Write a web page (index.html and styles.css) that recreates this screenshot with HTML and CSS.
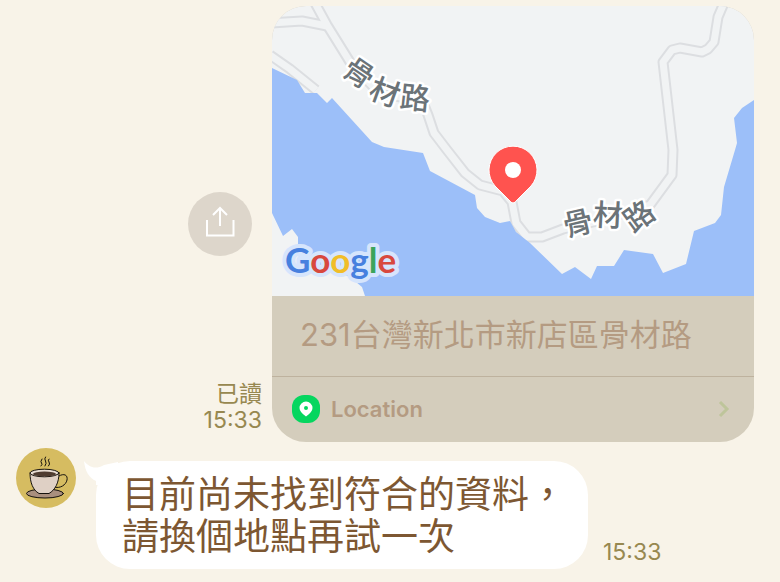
FILE: index.html
```html
<!DOCTYPE html>
<html lang="zh-Hant">
<head>
<meta charset="utf-8">
<meta name="viewport" content="width=device-width, initial-scale=1">
<title>Chat</title>
<link rel="stylesheet" href="styles.css">
</head>
<body>
<main class="chat">
  <section class="message message-sent">
    <div class="sent-side">
      <button class="share" type="button" aria-label="Share">
        <svg viewBox="0 0 64 64" width="64" height="64" fill="none" stroke="#fff" stroke-width="2">
          <path d="M19 28V43.500H45.500V28M32 34V16M25 23L32 16L39 23"/>
        </svg>
      </button>
      <div class="meta"><span>已讀</span><time>15:33</time></div>
    </div>
    <article class="card">
      <svg class="map" viewBox="0 0 482 290" role="img" aria-label="Map">
        <defs>
          <g id="roads" fill="none" stroke-linejoin="round">
            <path d="M43 -3L55 19L78 56L108 88L150 94L156 109L162 127L175 144L193 167L208 179L231 185L240 196L244 217L255 231L270 231L291 223L330 214L378 199L400 169L401 144L391 56L400 44L408 42L430 46L436 43L442 36L446 11L452 -3"/>
            <path d="M-2 17L30 15L55 20"/>
            <path d="M-2 49L18 63L44 84"/>
          </g>
        </defs>
        <rect width="482" height="290" fill="#f1f3f4"/>
        <use href="#roads" stroke="#dcdee1" stroke-width="11"/>
        <use href="#roads" stroke="#f1f3f4" stroke-width="7"/>
        <path fill="#9cbff9" d="M0 62L25 74L33 87L45 87L55 97L60 92L100 136L112 141L151 147L158 165L203 189L205 202L213 211L228 217L238 215L244 226L258 237L290 268L303 261L319 273L325 260L342 260L352 244L381 248L391 267L414 258L422 225L443 217L449 209L452 181L463 144L465 137L462 112L470 102L482 94V290H93L90 281L78 271L61 264L26 250V231L20 223L11 230L0 207Z"/>
        <g class="road-label">
          <text transform="translate(87 67) rotate(34)" y="11">骨</text>
          <text transform="translate(113 86) rotate(20)" y="11">材</text>
          <text transform="translate(143 92) rotate(6)" y="11">路</text>
          <text transform="translate(306 217) rotate(-13)" y="11">骨</text>
          <text transform="translate(336 209) rotate(3)" y="11">材</text>
          <text transform="translate(367 210) rotate(-36)" y="11">路</text>
        </g>
        <path fill="#ff534f" stroke="#fff" stroke-width="1" d="M241 197Q239 197 237 194L223 180A24 24 0 1 1 259 180L245 194Q243 197 241 197Z"/>
        <circle cx="241" cy="164" r="8" fill="#fff"/>
        <use class="brand-halo" href="#brand"/>
        <text id="brand" class="map-brand" x="13" y="267"><tspan fill="#4780df">G</tspan><tspan fill="#d8483e">o</tspan><tspan fill="#f1bd28">o</tspan><tspan fill="#4780df">g</tspan><tspan fill="#3ba45b">l</tspan><tspan fill="#d8483e">e</tspan></text>
      </svg>
      <p class="address">231台灣新北市新店區骨材路</p>
      <a class="location" href="#">
        <svg viewBox="0 0 28 28" width="28" height="28">
          <rect width="28" height="28" rx="12" fill="#06d65f"/>
          <path fill="#fff" fill-rule="evenodd" d="M14 21.500Q7.500 17 7.500 13A6.500 6.500 0 0 1 20.500 13Q20.500 17 14 21.500ZM14 11A2 2 0 1 0 14 15A2 2 0 1 0 14 11Z"/>
        </svg>
        <span>Location</span>
        <svg class="chevron" viewBox="0 0 12 18" width="12" height="18" fill="none" stroke="#bec59b" stroke-width="3"><path d="M2 2L9 9L2 16"/></svg>
      </a>
    </article>
  </section>

  <section class="message message-received">
    <svg class="avatar" viewBox="0 0 60 60" width="60" height="60" role="img" aria-label="Coffee">
      <circle cx="30" cy="30" r="30" fill="#d6bc61"/>
      <g stroke="#16120d" stroke-width="1" stroke-linecap="round" stroke-linejoin="round">
        <ellipse cx="29" cy="45.500" rx="18.500" ry="4.500" fill="#a98f7e"/>
        <path fill="none" d="M43 28C48 25 52 27 51 32C50 37 44 41 38 39"/>
        <path fill="#dfd0c5" d="M14 25C14 35 17 42 23 45.500H33C39 42 43 35 43 25Z"/>
        <ellipse cx="28.500" cy="25" rx="14.500" ry="3.800" fill="#e8ddd4"/>
        <ellipse cx="28.500" cy="26" rx="11.500" ry="2.600" fill="#4f3c31" stroke="none"/>
        <path fill="none" d="M25 18Q27 16 25.500 15T26 11M29 18Q31 15 29.500 13T29.500 9M32.500 18Q34.500 16 33 14T33 11"/>
      </g>
    </svg>
    <div class="bubble">
      <svg class="tail" viewBox="0 0 34 24" width="34" height="24"><path fill="#fff" d="M0 0C5 6 11 9 20 4L34 1V24H12V20C5 17 1 10 0 0Z"/></svg>
      <p>目前尚未找到符合的資料，<br>請換個地點再試一次</p>
    </div>
    <time class="meta">15:33</time>
  </section>
</main>
</body>
</html>
```
FILE: styles.css
```css
* {
  box-sizing: border-box;
}

body {
  margin: 0;
  background: #f8f3e8;
  font-family: Inter, "Noto Sans CJK TC", sans-serif;
}

p {
  margin: 0;
}

.chat {
  display: flex;
  flex-direction: column;
  gap: 6px;
  padding: 6px 26px 12px 16px;
}

.message {
  display: flex;
}

.message-sent {
  justify-content: flex-end;
  gap: 10px;
}

.sent-side {
  display: grid;
  grid-template-rows: 1fr auto 1fr;
  width: 74px;
}

.share {
  grid-row: 2;
  width: 64px;
  height: 64px;
  padding: 0;
  border: 0;
  border-radius: 50%;
  background: #ddd6cb;
}

.share svg {
  display: block;
}

.meta {
  color: #978850;
  font-size: 23px;
  line-height: 26px;
}

.sent-side .meta {
  grid-row: 3;
  display: flex;
  flex-direction: column;
  align-items: flex-end;
  justify-content: flex-end;
  padding-bottom: 9px;
}

.card {
  flex: 0 1 482px;
  overflow: hidden;
  border-radius: 34px;
  background: #d4cdbc;
  color: #b49b82;
}

.map {
  display: block;
  width: 100%;
}

.road-label {
  fill: #6b7378;
  stroke: #fff;
  stroke-width: 5px;
  stroke-linejoin: round;
  paint-order: stroke;
  font-size: 30px;
  font-weight: 500;
  text-anchor: middle;
}

.map-brand {
  font-family: Lato, sans-serif;
  font-size: 35px;
  font-weight: 700;
}

.brand-halo {
  stroke: #d6e5fc;
  stroke-width: 8px;
  stroke-linejoin: round;
}

.address {
  padding: 17px 28px 19px;
  border-bottom: 1px solid #beb29e;
  font-size: 31px;
  line-height: 44px;
}

.location {
  display: flex;
  align-items: center;
  gap: 11px;
  padding: 18px 24px 19px 20px;
  color: inherit;
  font-size: 22px;
  font-weight: 600;
  line-height: 28px;
  text-decoration: none;
}

.chevron {
  margin-left: auto;
}

.message-received {
  align-items: flex-end;
}

.avatar {
  flex: none;
  align-self: flex-start;
}

.bubble {
  position: relative;
  margin: 13px 15px 0 20px;
  padding: 13px 22px 11px 26px;
  border-radius: 34px;
  background: #fff;
  color: #7d5732;
  font-size: 37px;
  line-height: 42px;
}

.tail {
  position: absolute;
  top: 0;
  left: -12px;
}

.message-received .meta {
  padding-bottom: 4px;
}
```
